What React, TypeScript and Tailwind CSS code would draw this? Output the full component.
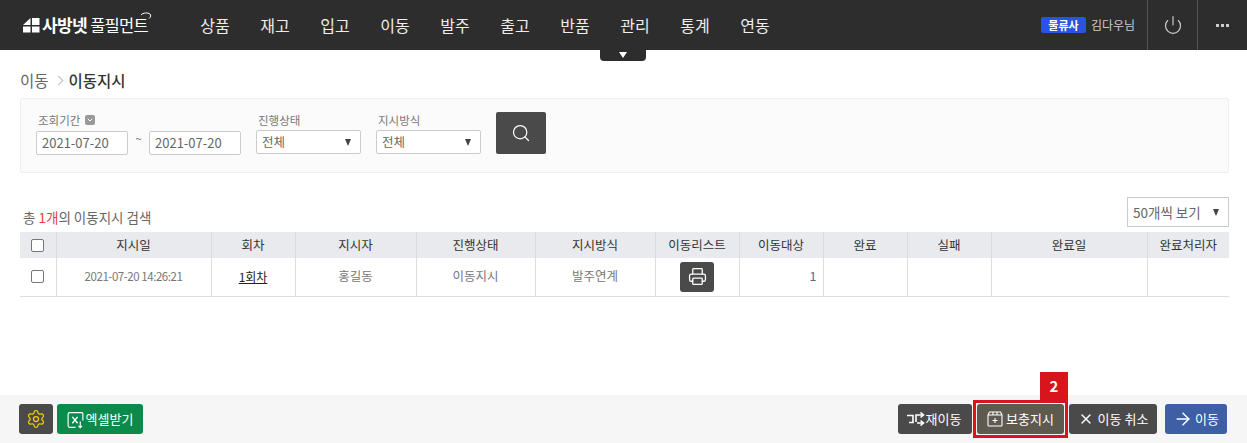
import { ArrowRight, ChevronDown, Power, Printer, Search, Settings, X } from 'lucide-react'

const NAV = ['상품', '재고', '입고', '이동', '발주', '출고', '반품', '관리', '통계', '연동']

const COLUMNS = [
  { label: '지시일', width: 'w-[155px]' },
  { label: '회차', width: 'w-[84px]' },
  { label: '지시자', width: 'w-[121px]' },
  { label: '진행상태', width: 'w-[119px]' },
  { label: '지시방식', width: 'w-[120px]' },
  { label: '이동리스트', width: 'w-[84px]' },
  { label: '이동대상', width: 'w-[84px]' },
  { label: '완료', width: 'w-[84px]' },
  { label: '실패', width: 'w-[84px]' },
  { label: '완료일', width: 'w-[156px]' },
  { label: '완료처리자', width: 'w-[82px]' },
]

function Caret({ className = '' }: { className?: string }) {
  return <span className={`h-0 w-0 border-x-[3.5px] border-t-[7px] border-x-transparent border-t-[#444] ${className}`} />
}

function Checkbox() {
  return <span className="block h-[13px] w-[13px] mx-auto rounded-[2px] border border-[#767676] bg-white" />
}

function DateField({ value }: { value: string }) {
  return (
    <div className="flex h-6 w-[92px] items-center rounded-[2px] border border-[#ccc] bg-white pl-[5px] text-[13px] text-[#666]">
      {value}
    </div>
  )
}

function SelectField({ width, label }: { width: string; label: string }) {
  return (
    <div className="flex flex-col">
      <span className="mb-[2px] pl-[2px] text-[11.5px] leading-[16px] text-[#777]">{label}</span>
      <div className={`flex h-6 items-center justify-between rounded-[2px] border border-[#ccc] bg-white pl-[5px] pr-[9px] text-[12.5px] text-[#666] ${width}`}>
        전체
        <Caret />
      </div>
    </div>
  )
}

function Logo() {
  return (
    <div className="flex w-[185px] items-center pl-[23px] text-white">
      <svg width="17" height="15" viewBox="0 0 17 15" fill="currentColor" className="mr-[2px]">
        <path d="M0 7 L7.5 0 V7 Z M9 0 H16.5 V7 H9 Z M0 8.5 H7.5 V14.5 H0 Z M9 8.5 H16.5 V14.5 H9 Z" />
      </svg>
      <span className="text-[17px] font-bold tracking-[-0.6px]">사방넷</span>
      <span className="relative ml-[3px] text-[16.5px] font-normal tracking-[-0.7px]">
        풀필먼트
        <svg width="12" height="9" viewBox="0 0 12 9" fill="none" stroke="currentColor" className="absolute -right-[4px] -top-[1px]">
          <path d="M1 3 C3 0.5 8 0.5 10 2 C11 3 11 5 9 6.5" />
        </svg>
      </span>
    </div>
  )
}

function ActionButton({ className, children }: { className: string; children: React.ReactNode }) {
  return (
    <button className={`flex h-[30px] items-center justify-center rounded-[3px] text-[13px] text-white ${className}`}>
      {children}
    </button>
  )
}

export default function App() {
  return (
    <div className="relative flex h-screen flex-col bg-white font-['Noto_Sans_CJK_KR',sans-serif]">
      <header className="flex h-[50px] shrink-0 items-center bg-[#2d2d2d]">
        <Logo />
        <nav className="flex">
          {NAV.map((item) => (
            <span key={item} className="w-[60px] text-center text-[16px] text-[#eee]">
              {item}
            </span>
          ))}
        </nav>
        <div className="ml-auto flex h-full items-center">
          <span className="flex h-4 w-[45px] items-center justify-center rounded-[2px] bg-[#2b52e0] text-[11px] font-bold text-white">
            물류사
          </span>
          <span className="ml-[5px] w-[56px] text-[12px] text-[#ccc]">김다우님</span>
          <div className="flex h-full w-[50px] items-center justify-center border-l border-[#555]">
            <Power size={20} strokeWidth={1.4} className="text-[#ccc]" />
          </div>
          <div className="flex h-full w-[50px] items-center justify-center gap-[2px] border-l border-[#555]">
            <span className="h-[3px] w-[3px] bg-[#ccc]" />
            <span className="h-[3px] w-[3px] bg-[#ccc]" />
            <span className="h-[3px] w-[3px] bg-[#ccc]" />
          </div>
        </div>
      </header>

      <div className="absolute left-[600px] top-[50px] flex h-[11px] w-[46px] justify-center rounded-b-[4px] bg-[#2d2d2d] pt-[2px]">
        <span className="h-0 w-0 border-x-[4px] border-t-[6px] border-x-transparent border-t-white" />
      </div>

      <main className="flex-1 pl-[20px] pr-[18px]">
        <div className="flex h-[48px] items-center pt-[13px] text-[15.5px] text-[#666]">
          이동
          <span className="ml-[6px] mr-[7px] h-[7px] w-[7px] rotate-45 border-r border-t border-[#bbb]" />
          <span className="font-medium text-[#333]">이동지시</span>
        </div>

        <section className="flex h-[75px] items-start rounded-[2px] border border-[#eee] bg-[#fbfbfb] pl-[15px] pt-[13px]">
          <div className="mr-[15px] flex flex-col">
            <span className="mb-[2px] flex items-center pl-[2px] text-[11.5px] leading-[16px] text-[#777]">
              조회기간
              <span className="ml-[5px] flex h-[10px] w-[10px] items-center justify-center rounded-[2px] bg-[#999]">
                <ChevronDown size={8} strokeWidth={3} className="text-white" />
              </span>
            </span>
            <div className="flex items-center">
              <DateField value="2021-07-20" />
              <span className="w-[21px] pb-[9px] text-center text-[11px] text-[#666]">~</span>
              <DateField value="2021-07-20" />
            </div>
          </div>
          <SelectField width="w-[105px]" label="진행상태" />
          <div className="ml-[15px]">
            <SelectField width="w-[105px]" label="지시방식" />
          </div>
          <button className="ml-[15px] flex h-[42px] w-[50px] items-center justify-center rounded-[2px] bg-[#4a4a4a]">
            <Search size={20} strokeWidth={1.5} className="text-white" />
          </button>
        </section>

        <div className="flex h-[59px] items-end justify-between pb-[5px]">
          <span className="pb-[1px] pl-[3px] text-[13.5px] leading-[18px] text-[#666]">
            총 <span className="text-[#e0433a]">1개</span>의 이동지시 검색
          </span>
          <div className="flex h-[30px] w-[102px] items-center justify-between border border-[#ccc] bg-white pl-[5px] pr-[9px] text-[13.5px] text-[#666]">
            50개씩 보기
            <Caret />
          </div>
        </div>

        <table className="w-full table-fixed border-collapse text-[12.5px]">
          <colgroup>
            <col className="w-[36px]" />
            {COLUMNS.map((col) => (
              <col key={col.label} className={col.width} />
            ))}
          </colgroup>
          <thead>
            <tr className="h-[26px] bg-[#e8eaee] text-[#333]">
              <th className="border-l-0 font-normal">
                <Checkbox />
              </th>
              {COLUMNS.map((col) => (
                <th key={col.label} className="border-l border-[#dcdcdc] font-normal">
                  {col.label}
                </th>
              ))}
            </tr>
          </thead>
          <tbody>
            <tr className="h-[38px] border-b border-[#ddd] text-center text-[#777]">
              <td>
                <Checkbox />
              </td>
              <td className="border-l border-[#ddd] text-[11.5px] tracking-[-0.45px]">2021-07-20 14:26:21</td>
              <td className="border-l border-[#ddd] text-[12px] text-[#222] underline">1회차</td>
              <td className="border-l border-[#ddd]">홍길동</td>
              <td className="border-l border-[#ddd]">이동지시</td>
              <td className="border-l border-[#ddd]">발주연계</td>
              <td className="border-l border-[#ddd]">
                <span className="mx-auto flex h-[30px] w-[34px] items-center justify-center rounded-[3px] bg-[#4a4a4a]">
                  <Printer size={19} strokeWidth={1.6} className="text-white" />
                </span>
              </td>
              <td className="border-l border-[#ddd] pr-[6px] text-right text-[#5a6b8c]">1</td>
              <td className="border-l border-[#ddd]" />
              <td className="border-l border-[#ddd]" />
              <td className="border-l border-[#ddd]" />
              <td className="border-l border-[#ddd]" />
            </tr>
          </tbody>
        </table>
      </main>

      <footer className="flex h-[48px] shrink-0 items-center justify-between bg-[#f6f6f6] pl-[19px] pr-[20px]">
        <div className="flex gap-[4px]">
          <ActionButton className="w-[34px] bg-[#4a4a4a]">
            <Settings size={20} strokeWidth={1.5} className="text-[#f5cf00]" />
          </ActionButton>
          <ActionButton className="w-[86px] gap-[2px] bg-[#0b8a4c]">
            <svg width="17" height="19" viewBox="0 0 16 18" fill="none" stroke="currentColor" strokeWidth="1.1">
              <path d="M8 16.5 H2.5 Q1 16.5 1 15 V4 Q1 2.5 2.5 2.5 H14 Q15 2.5 15 4 V10" />
              <path d="M5 6.5 L10 12.5 M10 6.5 L5 12.5" strokeWidth="1.3" />
              <path d="M12.5 11 V16.5 M10.8 15 L12.5 16.8 L14.2 15" />
            </svg>
            엑셀받기
          </ActionButton>
        </div>
        <div className="flex">
          <ActionButton className="w-[74px] gap-[1px] bg-[#4a4a4a] pr-[2px]">
            <svg width="18" height="14" viewBox="0 0 18 14" fill="none" stroke="currentColor" strokeWidth="1.6">
              <path d="M0 3.5 H6 V10.5 H2" />
              <path d="M9 10 V3 H16 M13.5 0.5 L16.5 3 L13.5 5.5 M10 11 H16 M13.5 8.5 L16.5 11 L13.5 13.5" />
            </svg>
            재이동
          </ActionButton>
          <div className="relative mx-[5px]">
            <ActionButton className="w-[87px] gap-[3px] bg-[#5f5a50]">
              <svg width="16" height="16" viewBox="0 0 16 16" fill="none" stroke="currentColor" strokeWidth="1.1">
                <path d="M1 4 L2.5 1 H13.5 L15 4 V14 Q15 15 14 15 H2 Q1 15 1 14 Z M1 4 H15 M6 1 V4 M10 1 V4" />
                <path d="M8 7 V12 M5.5 9.5 H10.5" />
              </svg>
              보충지시
            </ActionButton>
            <div className="pointer-events-none absolute -inset-x-[4px] -inset-y-[4px] border-[3px] border-[#d8141c]" />
            <div className="absolute -right-[4px] -top-[32px] flex h-[28px] w-[28px] items-center justify-center bg-[#d8141c] text-[15px] font-bold text-white">
              2
            </div>
          </div>
          <ActionButton className="w-[88px] gap-[4px] bg-[#4a4a4a]">
            <X size={16} strokeWidth={2} />
            이동 취소
          </ActionButton>
          <ActionButton className="ml-[8px] w-[62px] gap-[2px] bg-[#3e5fa5]">
            <ArrowRight size={20} strokeWidth={1.8} />
            이동
          </ActionButton>
        </div>
      </footer>
    </div>
  )
}
